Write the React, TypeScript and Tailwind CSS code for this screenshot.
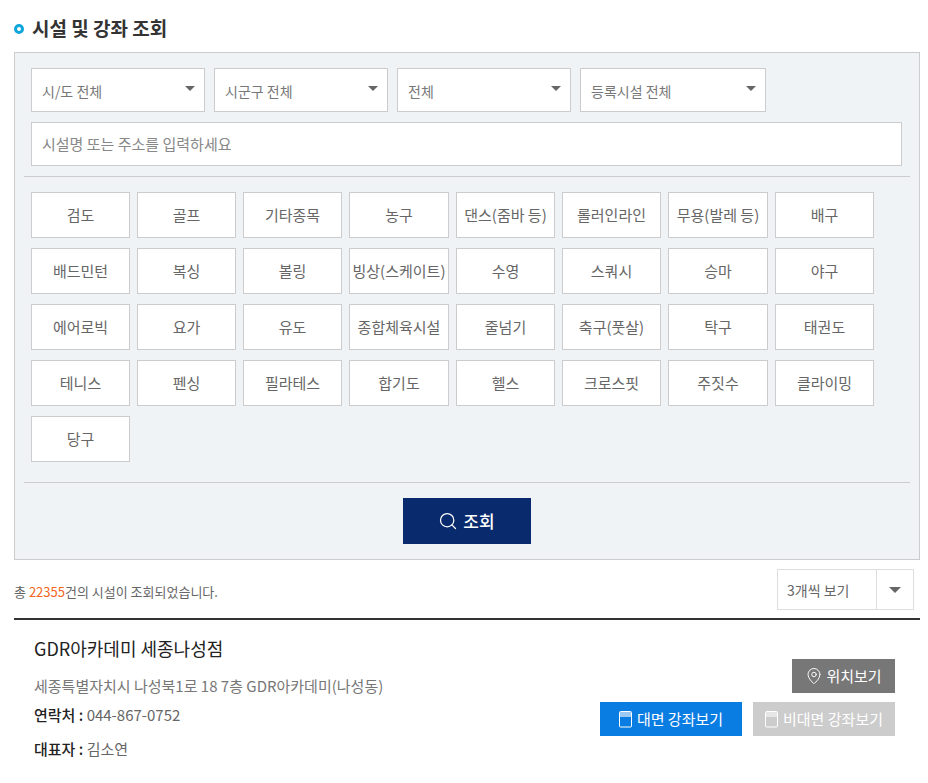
import { MapPin, Search } from "lucide-react";

const sports = [
  "검도", "골프", "기타종목", "농구", "댄스(줌바 등)", "롤러인라인", "무용(발레 등)", "배구",
  "배드민턴", "복싱", "볼링", "빙상(스케이트)", "수영", "스쿼시", "승마", "야구",
  "에어로빅", "요가", "유도", "종합체육시설", "줄넘기", "축구(풋살)", "탁구", "태권도",
  "테니스", "펜싱", "필라테스", "합기도", "헬스", "크로스핏", "주짓수", "클라이밍",
  "당구",
];

const Caret = () => (
  <span className="block w-0 h-0 border-x-[5px] border-x-transparent border-t-[5px] border-t-[#666]" />
);

const SelectBox = ({ label, width }: { label: string; width: string }) => (
  <div className={`${width} h-11 bg-white border border-[#ccc] flex items-start pl-[10px] pr-[9px] text-sm text-[#777]`}>
    <span className="flex-1 leading-[45px]">{label}</span>
    <span className="pt-[17px]"><Caret /></span>
  </div>
);

const BookIcon = ({ tone }: { tone: string }) => (
  <svg width="13" height="17" viewBox="0 0 13 17" className="mr-[5px]">
    <rect x="0.5" y="0.5" width="12" height="15.5" rx="1" fill="none" stroke="#fff" />
    <rect x="1" y="1" width="11" height="5" fill={tone} />
  </svg>
);

export default function App() {
  return (
    <div className="w-[928px] h-[783px] overflow-hidden bg-white pl-[14px] pr-2 pt-[14px] font-['Noto_Sans_CJK_KR','Noto_Sans',sans-serif]">
      <div className="flex items-center h-[30px] mb-[8px]">
        <span className="w-[10px] h-[10px] rounded-full border-[3px] border-[#0fa6dc] mr-2" />
        <h2 className="text-[19px] leading-[28px] mb-[2px] font-bold text-[#333]">시설 및 강좌 조회</h2>
      </div>

      <div className="h-[508px] border border-[#ccc] bg-[#f0f3f6] pt-[15px] px-[9px]">
        <div className="px-[7px]">
          <div className="flex gap-[9px]">
            <SelectBox label="시/도 전체" width="w-[174px]" />
            <SelectBox label="시군구 전체" width="w-[174px]" />
            <SelectBox label="전체" width="w-[174px]" />
            <SelectBox label="등록시설 전체" width="w-[186px]" />
          </div>
          <div className="mt-[10px] w-[871px] h-11 bg-white border border-[#ccc] pl-[10px] text-[15px] leading-[41px] text-[#888]">
            시설명 또는 주소를 입력하세요
          </div>
        </div>

        <div className="mt-[10px] border-t border-[#ccc]" />

        <div className="mt-[15px] px-[7px] h-[270px] grid grid-cols-[99px_99px_99px_100px_99px_99px_100px_99px] auto-rows-[46px] gap-x-[7px] gap-y-[10px]">
          {sports.map((name) => (
            <div
              key={name}
              className="bg-white border border-[#ccc] flex items-center justify-center text-[15px] text-[#666] whitespace-nowrap"
            >
              {name}
            </div>
          ))}
        </div>

        <div className="mt-[20px] border-t border-[#ccc]" />

        <div className="mt-[15px] flex justify-center pr-[1px]">
          <button className="w-[128px] h-[46px] bg-[#0a2a6e] text-white flex items-center justify-center text-[17px] font-medium">
            <Search size={20} strokeWidth={1.5} className="mr-[5px]" />
            조회
          </button>
        </div>
      </div>

      <div className="h-[58px] flex items-start justify-between w-[906px]">
        <p className="mt-[22px] text-[13px] leading-[20px] text-[#666]">
          총 <span className="text-[#f26522]">22355</span>건의 시설이 조회되었습니다.
        </p>
        <div className="mt-[9px] mr-[6px] w-[137px] h-[41px] border border-[#ddd] flex text-sm text-[#666]">
          <span className="flex-1 pl-[9px] leading-[41px]">3개씩 보기</span>
          <span className="w-[37px] border-l border-[#ddd] flex items-center justify-center">
            <span className="block w-0 h-0 border-x-[6px] border-x-transparent border-t-[6px] border-t-[#666]" />
          </span>
        </div>
      </div>

      <div className="w-[906px] border-t-2 border-[#333] pl-5 pr-[25px] pt-[16px] flex justify-between">
        <div>
          <h3 className="text-lg font-normal text-[#222] leading-6">GDR아카데미 세종나성점</h3>
          <p className="mt-[14px] text-[15px] text-[#777] leading-6">세종특별자치시 나성북1로 18 7층 GDR아카데미(나성동)</p>
          <p className="mt-[5px] text-[15px] text-[#666] leading-6">
            <b className="font-medium text-[#222]">연락처 : </b>044-867-0752
          </p>
          <p className="mt-[10px] text-[15px] text-[#666] leading-6">
            <b className="font-medium text-[#222]">대표자 : </b>김소연
          </p>
        </div>
        <div className="pt-[23px] flex flex-col items-end gap-[9px]">
          <button className="w-[103px] h-[34px] bg-[#777] text-white text-[15px] flex items-center justify-center">
            <MapPin size={18} strokeWidth={1.25} className="mr-[3px]" />
            위치보기
          </button>
          <div className="flex gap-[11px]">
            <button className="w-[142px] h-[34px] bg-[#0a7de2] text-white text-[15px] flex items-center justify-center">
              <BookIcon tone="#9cc9f3" />
              대면 강좌보기
            </button>
            <button className="w-[142px] h-[34px] bg-[#ccc] text-white text-[15px] flex items-center justify-center">
              <BookIcon tone="#e6e6e6" />
              비대면 강좌보기
            </button>
          </div>
        </div>
      </div>
    </div>
  );
}
